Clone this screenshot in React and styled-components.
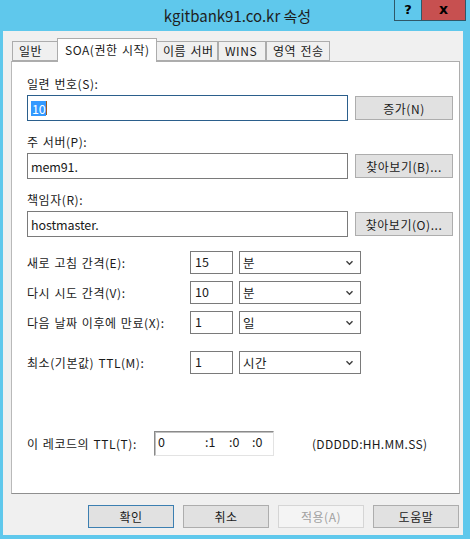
import React from "react";
import styled, { createGlobalStyle } from "styled-components";

const GlobalStyle = createGlobalStyle`
  html, body {
    margin: 0;
    padding: 0;
    background: #5fc8ec;
  }
  body {
    font-family: "Noto Sans CJK KR", "Noto Sans", sans-serif;
    font-size: 12px;
    letter-spacing: 0.55px;
    word-spacing: 1px;
    color: #1a1a1a;
  }
`;

const tabs = ["일반", "SOA(권한 시작)", "이름 서버", "WINS", "영역 전송"];
const tabWidths = [46, 100, 62, 48, 64];

const intervals = [
  { label: "새로 고침 간격(E):", value: "15", unit: "분" },
  { label: "다시 시도 간격(V):", value: "10", unit: "분" },
  { label: "다음 날짜 이후에 만료(X):", value: "1", unit: "일" },
];

const Chevron = () => (
  <svg width="9" height="6" viewBox="0 0 9 6">
    <polyline points="1.5,1.2 4.5,4.3 7.5,1.2" fill="none" stroke="#404040" strokeWidth="1.4" />
  </svg>
);

const App = () => {
  return (
    <>
      <GlobalStyle />
      <Window>
        <TitleBar>
          <span />
          <Title>kgitbank91.co.kr 속성</Title>
          <Caption>
            <CaptionButton>?</CaptionButton>
            <CaptionButton close>x</CaptionButton>
          </Caption>
        </TitleBar>
        <Body>
          <TabStrip>
            {tabs.map((t, i) => (
              <Tab key={t} active={i === 1} style={{ width: tabWidths[i] }}>
                {t}
              </Tab>
            ))}
          </TabStrip>
          <Panel>
            <FieldLabel>일련 번호(S):</FieldLabel>
            <FieldRow>
              <TextBox focused>
                <Selected>10</Selected>
                <Caret />
              </TextBox>
              <Button>증가(N)</Button>
            </FieldRow>

            <FieldLabel>주 서버(P):</FieldLabel>
            <FieldRow>
              <TextBox>mem91.</TextBox>
              <Button>찾아보기(B)...</Button>
            </FieldRow>

            <FieldLabel>책임자(R):</FieldLabel>
            <FieldRow>
              <TextBox>hostmaster.</TextBox>
              <Button>찾아보기(O)...</Button>
            </FieldRow>

            <IntervalList>
              {intervals.map((r) => (
                <IntervalRow key={r.label}>
                  <RowLabel>{r.label}</RowLabel>
                  <NumberBox>{r.value}</NumberBox>
                  <Select>
                    <span>{r.unit}</span>
                    <Chevron />
                  </Select>
                </IntervalRow>
              ))}
            </IntervalList>

            <IntervalRow gapTop={17}>
              <RowLabel>최소(기본값) TTL(M):</RowLabel>
              <NumberBox>1</NumberBox>
              <Select>
                <span>시간</span>
                <Chevron />
              </Select>
            </IntervalRow>

            <TtlRow>
              <TtlLabel>이 레코드의 TTL(T):</TtlLabel>
              <TtlBox>
                <TtlPart w={47}>0</TtlPart>
                <TtlPart w={24}>:1</TtlPart>
                <TtlPart w={23}>:0</TtlPart>
                <TtlPart w={16}>:0</TtlPart>
              </TtlBox>
              <Format>(DDDDD:HH.MM.SS)</Format>
            </TtlRow>
          </Panel>
          <Footer>
            <DialogButton primary>확인</DialogButton>
            <DialogButton>취소</DialogButton>
            <DialogButton disabled>적용(A)</DialogButton>
            <DialogButton>도움말</DialogButton>
          </Footer>
        </Body>
      </Window>
    </>
  );
};

export default App;

const Window = styled.div`
  width: 470px;
  height: 539px;
  display: flex;
  flex-direction: column;
  background: #5fc8ec;
  box-sizing: border-box;
  padding: 0 7px 4px 3px;
`;

const TitleBar = styled.div`
  height: 31px;
  flex: none;
  display: grid;
  grid-template-columns: 1fr auto 1fr;
  margin-right: -7px;
`;

const Title = styled.div`
  font-size: 15px;
  letter-spacing: 0;
  word-spacing: 0;
  line-height: 31px;
  color: #1e1e1e;
  padding-left: 2px;
`;

const Caption = styled.div`
  justify-self: end;
  display: flex;
  align-items: flex-start;
  margin-right: 4px;
`;

const CaptionButton = styled.div`
  width: ${(p) => (p.close ? "44px" : "28px")};
  height: 21px;
  box-sizing: border-box;
  border: 1px solid #2f5868;
  border-top: none;
  border-left: ${(p) => (p.close ? "none" : "1px solid #2f5868")};
  background: ${(p) => (p.close ? "#c75050" : "#5fc8ec")};
  display: flex;
  align-items: center;
  justify-content: center;
  font-family: "DejaVu Sans", sans-serif;
  font-weight: bold;
  letter-spacing: 0;
  font-size: ${(p) => (p.close ? "14px" : "13px")};
  color: #000;
  line-height: 1;
  padding-bottom: 2px;
`;

const Body = styled.div`
  flex: 1;
  background: #f0f0f0;
  display: flex;
  flex-direction: column;
  padding: 7px 3px 0 8px;
`;

const TabStrip = styled.div`
  display: flex;
  align-items: flex-end;
  height: 23px;
  padding-left: 1px;
  position: relative;
  z-index: 1;
`;

const Tab = styled.div`
  box-sizing: border-box;
  height: ${(p) => (p.active ? "24px" : "20px")};
  margin-bottom: ${(p) => (p.active ? "-1px" : "0")};
  margin-left: ${(p) => (p.active ? "-1px" : "0")};
  margin-right: ${(p) => (p.active ? "-1px" : "0")};
  border: 1px solid #acacac;
  border-bottom: ${(p) => (p.active ? "none" : "1px solid #acacac")};
  background: ${(p) => (p.active ? "#fff" : "#f0f0f0")};
  padding: ${(p) => (p.active ? "2px 0 0 7px" : "0 0 0 6px")};
  line-height: 18px;
  white-space: nowrap;
  overflow: hidden;
  & + & {
    border-left: ${(p) => (p.active ? "1px solid #acacac" : "none")};
  }
`;

const Panel = styled.div`
  height: 433px;
  box-sizing: border-box;
  background: #fff;
  border: 1px solid #adadad;
  border-left-color: #b9b9b9;
  border-bottom-color: #8f8f8f;
  padding: 14px 0 0 15px;
  display: flex;
  flex-direction: column;
`;

const FieldLabel = styled.div`
  line-height: 16px;
  height: 16px;
  margin-bottom: 3px;
`;

const FieldRow = styled.div`
  display: flex;
  align-items: center;
  gap: 7px;
  margin-bottom: 13px;
`;

const TextBox = styled.div`
  width: 321px;
  height: 26px;
  box-sizing: border-box;
  border: 1px solid ${(p) => (p.focused ? "#2b5f8c" : "#7a7a7a")};
  display: flex;
  align-items: center;
  padding-left: 3px;
  font-size: 12.5px;
  letter-spacing: -0.1px;
  color: #1a1a1a;
`;

const Selected = styled.span`
  background: #3399ff;
  color: #fff;
  line-height: 15px;
  padding: 0 0 0 1px;
`;

const Caret = styled.span`
  width: 1px;
  height: 14px;
  background: #9a5a20;
`;

const Button = styled.div`
  width: 98px;
  height: 24px;
  box-sizing: border-box;
  border: 1px solid #adadad;
  background: #e1e1e1;
  display: flex;
  align-items: center;
  justify-content: center;
`;

const IntervalList = styled.div`
  display: flex;
  flex-direction: column;
  gap: 7px;
  margin-top: 1px;
`;

const IntervalRow = styled.div`
  display: flex;
  align-items: center;
  height: 23px;
  margin-top: ${(p) => (p.gapTop ? `${p.gapTop}px` : "0")};
`;

const RowLabel = styled.div`
  width: 163px;
  flex: none;
  white-space: nowrap;
`;

const NumberBox = styled.div`
  width: 43px;
  height: 23px;
  box-sizing: border-box;
  border: 1px solid #7a7a7a;
  padding-left: 4px;
  line-height: 20px;
  font-size: 12.5px;
  letter-spacing: 0;
  margin-right: 6px;
`;

const Select = styled.div`
  width: 122px;
  height: 23px;
  box-sizing: border-box;
  border: 1px solid #7a7a7a;
  display: flex;
  align-items: center;
  justify-content: space-between;
  padding: 0 6px 0 3px;
  font-size: 12.5px;
`;

const TtlRow = styled.div`
  display: flex;
  align-items: center;
  margin-top: 57px;
  height: 25px;
`;

const TtlLabel = styled.div`
  width: 127px;
  flex: none;
  white-space: nowrap;
`;

const TtlBox = styled.div`
  width: 120px;
  height: 25px;
  box-sizing: border-box;
  border: 1px solid;
  border-color: #8a8a8a #e3e3e3 #e3e3e3 #8a8a8a;
  box-shadow: inset 1px 1px 0 #c0c0c0;
  display: flex;
  align-items: flex-start;
  padding: 2px 0 0 3px;
  font-size: 12.5px;
  letter-spacing: 0;
  line-height: 16px;
`;

const TtlPart = styled.span`
  width: ${(p) => p.w}px;
  flex: none;
`;

const Format = styled.div`
  margin-left: 38px;
  letter-spacing: 0.3px;
  color: #1a1a1a;
`;

const Footer = styled.div`
  display: flex;
  justify-content: flex-end;
  gap: 9px;
  padding: 11px 1px 0 0;
`;

const DialogButton = styled.div`
  width: 86px;
  height: 23px;
  box-sizing: border-box;
  border: 1px solid ${(p) => (p.primary ? "#3c7fb1" : p.disabled ? "#d5d5d5" : "#adadad")};
  background: ${(p) => (p.disabled ? "#f4f4f4" : "#e1e1e1")};
  color: ${(p) => (p.disabled ? "#a0a0a0" : "#1a1a1a")};
  display: flex;
  align-items: center;
  justify-content: center;
`;
